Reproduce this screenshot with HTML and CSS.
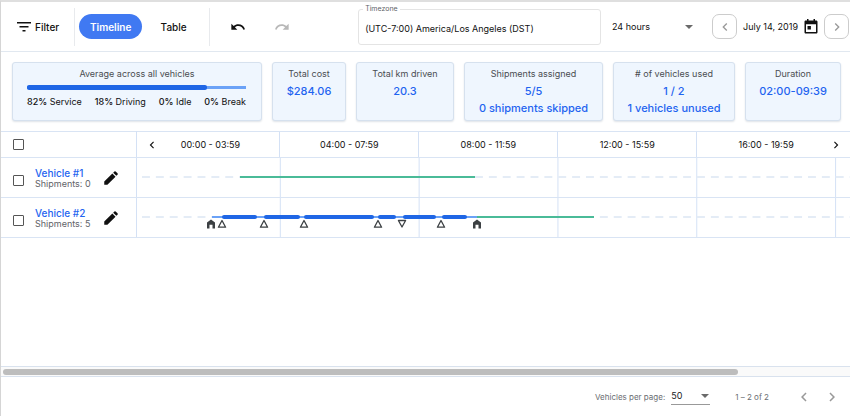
FILE: index.html
```
<!DOCTYPE html>
<html lang="en">
<head>
<meta charset="utf-8">
<title>Vehicle timeline</title>
<link rel="stylesheet" href="styles.css">
</head>
<body>
<svg class="defs" aria-hidden="true">
  <symbol id="left" viewBox="0 0 24 24"><path d="M15.4 7.4 14 6l-6 6 6 6 1.4-1.4L10.8 12z"/></symbol>
  <symbol id="right" viewBox="0 0 24 24"><path d="M8.6 16.6 10 18l6-6-6-6-1.4 1.4 4.6 4.6z"/></symbol>
  <symbol id="pencil" viewBox="0 0 24 24"><path d="M3 16.800V21h4.200L18 10.200 13.800 6zM20.700 7.500a1.200 1.200 0 0 0 0-1.700l-2.500-2.500a1.200 1.200 0 0 0-1.700 0L14.900 4.900l4.200 4.200z"/></symbol>
  <symbol id="undo" viewBox="0 0 24 24"><path d="M12.500 8c-2.650 0-5.050 1-6.900 2.600L2 7v9h9l-3.600-3.600c1.400-1.200 3.200-1.900 5.100-1.900 3.500 0 6.500 2.300 7.600 5.500l2.400-.8C21 11 17.100 8 12.500 8z"/></symbol>
  <symbol id="depot" viewBox="0 0 10 10"><path d="M1 9.500V3.500L5 .5l4 3v6H6.500V5.800h-3v3.700z"/></symbol>
  <symbol id="pickup" viewBox="0 0 10 10"><path class="hollow" d="M5 1.500 8.600 8.200H1.400z"/></symbol>
  <symbol id="delivery" viewBox="0 0 10 10"><path class="hollow" d="M5 8 1.400 1.500h7.200z"/></symbol>
</svg>
<div class="app">
  <header class="toolbar">
    <button class="filter"><svg class="filter-icon" viewBox="0 0 14 10"><path d="M0 0h14v1.600H0zM2.500 4h9v1.600h-9zM5.500 8h3v1.600h-3z"/></svg>Filter</button>
    <div class="views">
      <button class="pill active">Timeline</button>
      <button class="pill">Table</button>
    </div>
    <div class="history">
      <button aria-label="Undo"><svg viewBox="0 0 24 24"><use href="#undo"/></svg></button>
      <button aria-label="Redo" class="redo" disabled><svg viewBox="0 0 24 24"><use href="#undo"/></svg></button>
    </div>
    <div class="timezone">
      <label for="tz">Timezone</label>
      <input id="tz" value="(UTC-7:00) America/Los Angeles (DST)">
    </div>
    <div class="select range">
      <select aria-label="Visible range"><option>24 hours</option></select>
    </div>
    <div class="date">
      <button class="step" aria-label="Previous day"><svg viewBox="0 0 24 24"><use href="#left"/></svg></button>
      <span>July 14, 2019</span>
      <button aria-label="Choose date"><svg class="calendar" viewBox="0 0 14 15"><path fill-rule="evenodd" d="M3 0h1.500v1.500h5V0H11v1.500h1.200c.8 0 1.300.6 1.300 1.300v10.400c0 .8-.6 1.300-1.300 1.300H1.800c-.8 0-1.300-.6-1.300-1.300V2.800c0-.8.6-1.300 1.300-1.300H3zM2 5.200V13h10V5.200zM3.500 7h3.400v3.400H3.500z"/></svg></button>
      <button class="step" aria-label="Next day"><svg viewBox="0 0 24 24"><use href="#right"/></svg></button>
    </div>
  </header>

  <section class="stats">
    <div class="card">
      <h2>Average across all vehicles</h2>
      <div class="usage"><div class="usage-service" style="width:82%"></div></div>
      <div class="shares"><span><b>82%</b> Service</span><span><b>18%</b> Driving</span><span><b>0%</b> Idle</span><span><b>0%</b> Break</span></div>
    </div>
    <div class="card"><h2>Total cost</h2><p>$284.06</p></div>
    <div class="card"><h2>Total km driven</h2><p>20.3</p></div>
    <div class="card"><h2>Shipments assigned</h2><p>5/5</p><p>0 shipments skipped</p></div>
    <div class="card"><h2># of vehicles used</h2><p>1 / 2</p><p>1 vehicles unused</p></div>
    <div class="card"><h2>Duration</h2><p>02:00-09:39</p></div>
  </section>

  <main class="chart">
    <table>
      <thead>
        <tr>
          <th class="vehicle-col"><div class="vehicle"><input type="checkbox" aria-label="Select all vehicles"></div></th>
          <th class="lane-col">
            <div class="slots"><span>00:00 - 03:59</span><span>04:00 - 07:59</span><span>08:00 - 11:59</span><span>12:00 - 15:59</span><span>16:00 - 19:59</span></div>
            <button class="pan earlier" aria-label="Earlier"><svg viewBox="0 0 24 24"><use href="#left"/></svg></button>
            <button class="pan later" aria-label="Later"><svg viewBox="0 0 24 24"><use href="#right"/></svg></button>
          </th>
        </tr>
      </thead>
      <tbody>
        <tr>
          <td><div class="vehicle"><input type="checkbox" aria-label="Select Vehicle #1"><div class="name"><a href="#v1">Vehicle #1</a><span>Shipments: 0</span></div><button aria-label="Edit Vehicle #1"><svg viewBox="0 0 24 24"><use href="#pencil"/></svg></button></div></td>
          <td class="lane-col"><div class="lane">
            <i class="bar spare" style="--s:171;--e:577"></i>
          </div></td>
        </tr>
        <tr>
          <td><div class="vehicle"><input type="checkbox" aria-label="Select Vehicle #2"><div class="name"><a href="#v2">Vehicle #2</a><span>Shipments: 5</span></div><button aria-label="Edit Vehicle #2"><svg viewBox="0 0 24 24"><use href="#pencil"/></svg></button></div></td>
          <td class="lane-col"><div class="lane">
            <i class="bar spare" style="--s:580;--e:782"></i>
            <i class="bar driving" style="--s:121;--e:580"></i>
            <i class="bar service" style="--s:139;--e:200"></i>
            <i class="bar service" style="--s:212;--e:273"></i>
            <i class="bar service" style="--s:281;--e:401"></i>
            <i class="bar service" style="--s:409;--e:439"></i>
            <i class="bar service" style="--s:451;--e:509"></i>
            <i class="bar service" style="--s:520;--e:563"></i>
            <svg class="stop" style="--s:120"><use href="#depot"/></svg>
            <svg class="stop" style="--s:139"><use href="#pickup"/></svg>
            <svg class="stop" style="--s:212"><use href="#pickup"/></svg>
            <svg class="stop" style="--s:281"><use href="#pickup"/></svg>
            <svg class="stop" style="--s:409"><use href="#pickup"/></svg>
            <svg class="stop" style="--s:450"><use href="#delivery"/></svg>
            <svg class="stop" style="--s:518"><use href="#pickup"/></svg>
            <svg class="stop" style="--s:580"><use href="#depot"/></svg>
          </div></td>
        </tr>
      </tbody>
    </table>
  </main>

  <div class="scroll"><div class="thumb" style="width:87%"></div></div>

  <footer class="pager">
    <label for="size">Vehicles per page:</label>
    <div class="select size"><select id="size"><option>50</option></select></div>
    <span class="count">1 – 2 of 2</span>
    <button aria-label="Previous page"><svg viewBox="0 0 24 24"><use href="#left"/></svg></button>
    <button aria-label="Next page"><svg viewBox="0 0 24 24"><use href="#right"/></svg></button>
  </footer>
</div>
</body>
</html>
```
FILE: styles.css
```
* { box-sizing: border-box; }

body {
  margin: 0;
  font: 10px/12px Inter, Roboto, sans-serif;
  color: #111;
  background: #fff;
}

button, input, select { font: inherit; color: inherit; margin: 0; }
button { display: inline-flex; align-items: center; justify-content: center; padding: 0; border: 0; background: none; }
svg { display: block; fill: currentColor; }
h2, p { margin: 0; }
.defs { position: absolute; width: 0; height: 0; }
.hollow { fill: #fff; stroke: #3c4043; stroke-width: 1.3; stroke-linejoin: round; }

.app {
  display: flex;
  flex-direction: column;
  min-height: 100vh;
  border-top: 2px solid #dfdfdf;
  border-left: 1px solid #d5d5d5;
}

/* Toolbar */
.toolbar {
  display: flex;
  align-items: center;
  height: 50px;
  border-bottom: 1px solid #e1e8f0;
}
.filter { gap: 4px; padding: 0 15px 0 16px; height: 38px; font-weight: 500; }
.filter-icon { width: 14px; height: 10px; }
.views {
  display: flex;
  align-items: center;
  height: 38px;
  padding: 0 4px;
  border: solid #e8eaed;
  border-width: 0 1px;
}
.pill { width: 63px; height: 25px; border-radius: 13px; font-weight: 500; }
.pill.active { color: #fff; background: #4079f2; font-weight: 600; }
.history { display: flex; gap: 28px; margin-left: 20px; }
.history svg { width: 16px; height: 16px; }
.redo { color: #b8b8b8; transform: scaleX(-1); }
.timezone {
  position: relative;
  flex: 1;
  height: 36px;
  margin-left: 68px;
  border: 1px solid #e4e4e4;
  border-radius: 3px;
}
.timezone label {
  position: absolute;
  top: -5px;
  left: 4px;
  padding: 0 2px;
  font-size: 7px;
  line-height: 8px;
  color: #5f6368;
  background: #fff;
}
.timezone input { width: 100%; height: 34px; padding: 4px 6px 0; border: 0; background: none; font-size: 9px; }
.select { position: relative; }
.select select { width: 100%; padding: 0; border: 0; appearance: none; background: none; }
.select::after {
  content: "";
  position: absolute;
  top: 50%;
  right: 1px;
  margin-top: -2px;
  border: solid transparent;
  border-width: 4px 4px 0;
  border-top-color: #6a6a6a;
}
.range { width: 82px; margin: 0 18px 0 11px; font-size: 9px; }
.date { display: flex; align-items: center; gap: 6px; margin-right: 1px; }
.date span { white-space: nowrap; font-size: 9px; }
.step { width: 25px; height: 25px; color: #999; border: 1px solid #ccc; border-radius: 7px; }
.step svg { width: 16px; height: 16px; }
.calendar { width: 14px; height: 15px; }

/* Summary cards */
.stats {
  display: grid;
  grid-template-columns: 250fr 74fr 98fr 139fr 122fr 96fr;
  gap: 10px;
  padding: 10px 9px 10px 11px;
}
.card {
  min-width: 0;
  height: 59px;
  padding-top: 5px;
  text-align: center;
  white-space: nowrap;
  background: #eff6fe;
  border: 1px solid #d6e1ee;
  border-radius: 3px;
  box-shadow: 0 1px 2px #dfe3e8;
}
.card h2 { font-size: 9px; font-weight: 400; color: #4a4d51; }
.card p { margin-top: 5px; font-size: 11px; font-weight: 500; color: #1f64f0; }
.usage { display: flex; align-items: center; height: 5px; margin: 5px 15px 6px 14px; background: linear-gradient(#6ba2f7, #6ba2f7) center / 100% 3px no-repeat; }
.usage-service { height: 5px; border-radius: 2px; background: #1f66e5; }
.shares { display: flex; justify-content: space-between; margin: 0 15px 0 14px; font-size: 9px; }
.shares b { font-weight: 500; }

/* Timeline chart */
.chart { flex: 1; }
table { width: 100%; border-collapse: collapse; table-layout: fixed; border-top: 1px solid #d9e4f4; }
th, td { padding: 0; font-weight: 400; text-align: left; border-bottom: 1px solid #d9e4f4; }
.vehicle-col { width: 135px; }
.lane-col { position: relative; border-left: 1px solid #d4e1f5; }
.vehicle { display: flex; align-items: center; padding-left: 12px; }
.vehicle input { appearance: none; width: 11px; height: 11px; border: 1px solid #555; border-radius: 1px; background: #fff; }
td .vehicle { height: 38px; }
td .vehicle input { margin-top: 6px; }
.name { flex: 1; margin-left: 11px; }
.name a { display: block; font-weight: 500; color: #1f64f0; text-decoration: none; }
.name span { display: block; font-size: 9px; line-height: 10px; color: #5f6368; }
.vehicle button { margin-right: 16px; }
.vehicle button svg { width: 18px; height: 18px; }
.slots { display: grid; grid-template-columns: repeat(5, 240fr) 24fr; height: 25px; margin-left: 5px; }
.slots span { display: flex; align-items: center; justify-content: center; font-size: 9px; border-right: 1px solid #d4e1f5; }
.slots span:last-child { border-color: transparent; }
.pan { position: absolute; top: 6px; }
.pan svg { width: 14px; height: 14px; }
.earlier { left: 8px; }
.later { right: 7px; }

/* A lane spans 1224 minutes, with a grid line each 240 */
.lane {
  position: relative;
  height: 39px;
  margin-left: 5px;
  background:
    linear-gradient(90deg, #e4ecf6 8px, transparent 8px) 0 18px / calc(100% / 51) 2px repeat-x,
    linear-gradient(270deg, #d4e1f5 1px, transparent 1px) 0 0 / calc(100% * 240 / 1224) 100%;
}
.bar {
  position: absolute;
  left: calc(var(--s) / 1224 * 100%);
  width: calc((var(--e) - var(--s)) / 1224 * 100%);
}
.spare { top: 18px; height: 2px; background: #4abb98; }
.driving { top: 18px; height: 2px; background: #6ba2f7; }
.service { top: 17px; height: 4px; border-radius: 2px; background: #1f66e5; }
.stop {
  position: absolute;
  top: 21px;
  left: calc(var(--s) / 1224 * 100%);
  width: 10px;
  height: 10px;
  margin-left: -5px;
  color: #3c4043;
}

.scroll { height: 11px; padding: 2px; background: #fafafa; border: solid #d9e2ee; border-width: 1px 0; }
.thumb { height: 6px; border-radius: 3px; background: #bdbdbd; }

/* Pagination */
.pager { display: flex; align-items: center; justify-content: flex-end; height: 39px; padding-right: 9px; font-size: 8px; color: #6b6e72; }
.size { width: 39px; margin-left: 6px; border-bottom: 1px solid #999; color: #202124; font-size: 9px; }
.size select { height: 15px; }
.count { margin: 0 16px 0 25px; }
.pager button { margin-left: 10px; color: #999; }
.pager button svg { width: 18px; height: 18px; }
```
